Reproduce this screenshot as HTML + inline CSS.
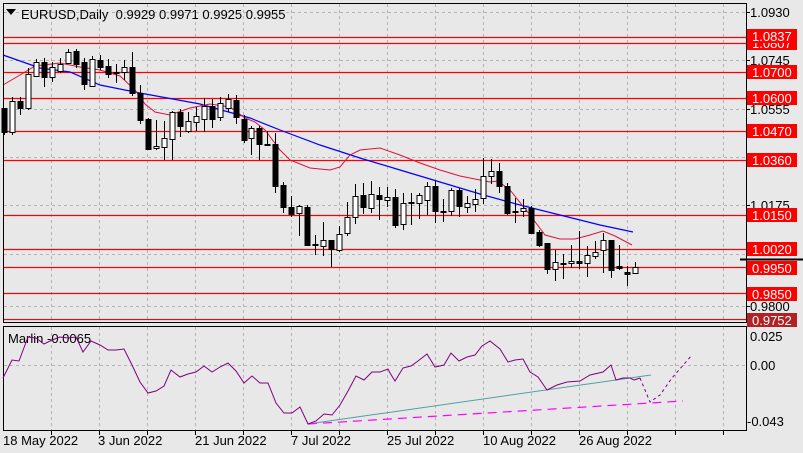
<!DOCTYPE html>
<html><head><meta charset="utf-8"><style>
html,body{margin:0;padding:0;background:#e8e8e8;width:803px;height:453px;overflow:hidden}
svg{display:block;font-family:"Liberation Sans",sans-serif}
</style></head><body>
<svg id="s" width="803" height="453" viewBox="0 0 803 453" xmlns="http://www.w3.org/2000/svg">
<rect x="0" y="0" width="803" height="453" fill="#e8e8e8"/>
<g id="grid" stroke="#b4b4b4" stroke-dasharray="3,3" stroke-width="1"></g>
<g id="hl"></g>
<polyline fill="none" stroke="#0000ff" stroke-width="1.2" points="3,55 40,68 70,72 100,85 140,93 200,104 250,118 280,130 320,145 360,158 400,170 440,182 480,194 520,205 560,215 600,225 633,232"/>
<polyline fill="none" stroke="#e0103c" stroke-width="1" points="3,85 20,75 35,66 60,63 80,67 100,70 120,76 135,90 145,104 155,112 170,115 190,108 210,104 230,107 245,118 255,122 265,130 280,150 290,160 310,168 330,170 340,167 350,155 360,150 380,148 400,155 420,163 440,170 460,176 480,180 490,182 498,181 510,190 530,215 545,235 560,239 575,239 590,235 603,231 615,236 632,245"/>
<g id="c"></g>
<rect x="3.5" y="3.5" width="743" height="319" fill="none" stroke="#000"/>
<rect x="3.5" y="326.5" width="743" height="104" fill="none" stroke="#000"/>
<line x1="740" y1="259.5" x2="803" y2="259.5" stroke="#000" stroke-width="2"/>
<g id="lab" font-size="13"></g>
<polygon points="6,9 16,9 11,15" fill="#000"/>
<text x="21" y="19" font-size="13" fill="#000">EURUSD,Daily&#160;&#160;0.9929 0.9971 0.9925 0.9955</text>
<text x="8" y="343" font-size="13" fill="#000">Marlin -0.0065</text>
<line x1="308" y1="424" x2="651" y2="375" stroke="#50a0a0" stroke-width="1"/>
<line x1="308" y1="424" x2="683" y2="401" stroke="#ff00ff" stroke-width="1.2" stroke-dasharray="9,6"/>
<polyline fill="none" stroke="#800080" stroke-width="1" points="3,378 12,360 19,361 28,337 36,338 44,344 52,340 60,337 68,338 76,337 83,352 91,341 100,345 108,350 116,350 124,349 132,365 140,382 148,393 156,391 164,386 171,370 180,377 188,374 196,372 204,366 212,372 220,367 228,363 236,371 244,383 252,376 260,383 268,383 276,403 284,413 292,413 300,407 308,424 316,421 324,414 332,415 340,405 348,391 356,376 364,380 372,372 380,372 388,369 390,373 395,381 403,368 411,366 418,361 427,354 435,367 444,365 451,353 459,361 467,357 475,355 482,346 490,341 500,349 508,362 515,360 523,359 530,372 538,377 547,390 557,385 567,382 580,381 590,375 603,372 611,365 616,380 623,378 630,378 634,380 640,378"/>
<polyline fill="none" stroke="#800080" stroke-width="1" stroke-dasharray="3,3" points="640,378 650,402 660,395 672,378 692,355"/>
<g font-size="13" fill="#000">
<text x="750" y="341">0.025</text><text x="750" y="370">0.00</text><text x="747" y="426">-0.043</text>
<text x="3" y="445">18 May 2022</text><text x="98" y="445">3 Jun 2022</text><text x="195" y="445">21 Jun 2022</text><text x="291" y="445">7 Jul 2022</text><text x="387" y="445">25 Jul 2022</text><text x="483" y="445">10 Aug 2022</text><text x="579" y="445">26 Aug 2022</text>
</g>
</svg>
<script>
var NS="http://www.w3.org/2000/svg";
function el(p,t,a){var e=document.createElementNS(NS,t);for(var k in a)e.setAttribute(k,a[k]);p.appendChild(e);return e;}
var g=document.getElementById('grid');
[51,99,147,195,243,291,339,387,435,483,531,579,627,675,723].forEach(function(x){
 el(g,'line',{x1:x+.5,y1:4,x2:x+.5,y2:322});el(g,'line',{x1:x+.5,y1:327,x2:x+.5,y2:430});
 el(document.getElementById('s'),'line',{x1:x+.5,y1:431,x2:x+.5,y2:435,stroke:'#000'});
});
[12,60,109,157,205,254,306].forEach(function(y){el(g,'line',{x1:4,y1:y+.5,x2:746,y2:y+.5});});
el(g,'line',{x1:4,y1:365.5,x2:746,y2:365.5});
var hl=document.getElementById('hl');
[[37,'#ff0000'],[43,'#ff0000'],[72,'#ff0000'],[98,'#ff0000'],[131,'#ff0000'],[160,'#ff0000'],[215,'#ff0000'],[249,'#ff0000'],[267,'#ff0000'],[293,'#ff0000'],[319,'#b22222']].forEach(function(a){
 el(hl,'line',{x1:4,y1:a[0]+.5,x2:746,y2:a[0]+.5,stroke:a[1],'stroke-width':1.3});});
var lab=document.getElementById('lab');
function txt(x,y,s,c){var t=el(lab,'text',{x:x,y:y,fill:c});t.textContent=s;}
[[12,'1.0930'],[60,'1.0745'],[109,'1.0555'],[205,'1.0175'],[306,'0.9800']].forEach(function(a){txt(750,a[0]+5,a[1],'#000');el(lab,'line',{x1:746,y1:a[0]+.5,x2:750,y2:a[0]+.5,stroke:'#000'});});
[[43,'1.0807','#ff0000'],[36,'1.0837','#ff0000'],[72,'1.0700','#ff0000'],[98,'1.0600','#ff0000'],[131,'1.0470','#ff0000'],[160,'1.0360','#ff0000'],[215,'1.0150','#ff0000'],[249,'1.0020','#ff0000'],[268,'0.9950','#ff0000'],[294,'0.9850','#ff0000'],[320,'0.9752','#b22222']].forEach(function(a){
 el(lab,'rect',{x:747,y:a[0]-7,width:50,height:14,fill:a[2]});txt(752,a[0]+5,a[1],'#fff');});
var C=[[4,108,108,132,135],[12,97,132,101,135],[20,97,101,108,115],[28,68,108,74,110],[36,59,76,62,77],[44,58,62,77,87],[52,62,77,67,82],[60,58,71,64,73],[68,49,63,52,64],[76,49,51,64,68],[84,58,62,84,90],[92,56,86,59,87],[100,55,60,67,70],[108,59,66,74,78],[116,64,72,73,83],[124,60,72,67,80],[132,52,67,93,96],[140,85,93,120,124],[148,118,119,149,150],[156,120,148,146,150],[164,121,147,138,160],[172,111,139,112,160],[180,109,112,126,137],[188,112,131,121,133],[196,107,122,116,131],[204,98,119,106,132],[212,99,106,119,128],[220,97,117,103,121],[228,94,108,99,112],[236,95,100,117,124],[244,115,119,140,143],[251,126,138,128,155],[259,126,128,144,160],[267,131,144,145,145],[275,133,144,186,193],[283,182,185,207,213],[291,196,207,214,217],[299,205,213,206,236],[307,205,207,245,246],[315,235,244,245,255],[323,222,246,240,256],[331,240,240,249,267],[339,226,250,234,252],[347,202,233,217,236],[355,184,217,196,224],[363,183,195,207,214],[371,181,208,194,213],[379,187,195,199,220],[387,187,200,197,207],[395,189,197,225,228],[403,193,224,203,230],[411,193,202,203,225],[419,193,203,195,219],[427,182,200,186,215],[435,181,186,211,223],[443,199,211,212,222],[451,188,211,190,216],[459,188,190,206,217],[467,196,207,203,213],[475,189,204,199,212],[483,158,198,176,204],[491,159,176,171,184],[499,163,171,186,193],[507,183,186,213,215],[515,198,211,212,223],[523,199,211,208,217],[531,206,208,233,234],[539,230,232,245,247],[547,243,243,269,274],[555,250,269,262,281],[563,254,263,264,279],[571,245,263,261,268],[579,231,261,263,269],[587,246,263,255,277],[595,241,256,252,259],[603,233,250,240,273],[611,240,240,270,278],[619,245,266,268,270],[627,266,272,274,286],[635,262,273,267,274]];
var cg=document.getElementById('c');
C.forEach(function(a){var x=a[0],h=a[1],o=a[2],c=a[3],l=a[4];var bull=c<o;
 el(cg,'line',{x1:x+.5,y1:h,x2:x+.5,y2:l,stroke:'#000'});
 var t=Math.min(o,c),b=Math.max(o,c);if(b-t<1)b=t+1;
 el(cg,'rect',{x:x-2,y:t+.5,width:5,height:b-t,fill:bull?'#fff':'#000',stroke:'#000','stroke-width':1});});
</script>
</body></html>
